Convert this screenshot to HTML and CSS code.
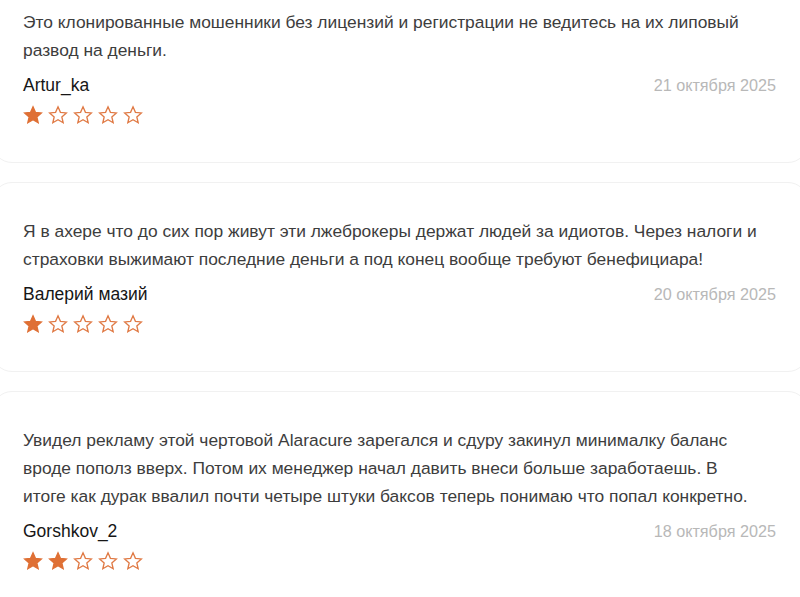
FILE: index.html
```html
<!DOCTYPE html>
<html lang="ru">
<head>
<meta charset="utf-8">
<link rel="stylesheet" href="styles.css">
</head>
<body>
<svg width="0" height="0" class="defs">
  <defs>
    <symbol id="star" viewBox="0 0 24 24">
      <path d="M12 2.2l2.9 6.6 7.1.7-5.4 4.8 1.6 7-6.2-3.7-6.2 3.7 1.6-7L2 9.5l7.1-.7z"/>
    </symbol>
  </defs>
</svg>
<main class="list">
  <article class="card first">
    <p class="text">Это клонированные мошенники без лицензий и регистрации не ведитесь на их липовый развод на деньги.</p>
    <div class="meta"><span class="name">Artur_ka</span><span class="date">21 октября 2025</span></div>
    <div class="stars">
      <svg class="star full"><use href="#star"/></svg>
      <svg class="star"><use href="#star"/></svg>
      <svg class="star"><use href="#star"/></svg>
      <svg class="star"><use href="#star"/></svg>
      <svg class="star"><use href="#star"/></svg>
    </div>
  </article>
  <article class="card">
    <p class="text">Я в ахере что до сих пор живут эти лжеброкеры держат людей за идиотов. Через налоги и страховки выжимают последние деньги а под конец вообще требуют бенефициара!</p>
    <div class="meta"><span class="name">Валерий мазий</span><span class="date">20 октября 2025</span></div>
    <div class="stars">
      <svg class="star full"><use href="#star"/></svg>
      <svg class="star"><use href="#star"/></svg>
      <svg class="star"><use href="#star"/></svg>
      <svg class="star"><use href="#star"/></svg>
      <svg class="star"><use href="#star"/></svg>
    </div>
  </article>
  <article class="card">
    <p class="text">Увидел рекламу этой чертовой Alaracure зарегался и сдуру закинул минималку баланс вроде пополз вверх. Потом их менеджер начал давить внеси больше заработаешь. В итоге как дурак ввалил почти четыре штуки баксов теперь понимаю что попал конкретно.</p>
    <div class="meta"><span class="name">Gorshkov_2</span><span class="date">18 октября 2025</span></div>
    <div class="stars">
      <svg class="star full"><use href="#star"/></svg>
      <svg class="star full"><use href="#star"/></svg>
      <svg class="star"><use href="#star"/></svg>
      <svg class="star"><use href="#star"/></svg>
      <svg class="star"><use href="#star"/></svg>
    </div>
  </article>
</main>
</body>
</html>
```

FILE: styles.css
```css
html, body {
  margin: 0;
  padding: 0;
  background: #ffffff;
  overflow: hidden;
}
body {
  font-family: "Liberation Sans", Arial, sans-serif;
  color: #3a3a3a;
}
.defs {
  position: absolute;
  width: 0;
  height: 0;
}
.list {
  display: flex;
  flex-direction: column;
  gap: 19px;
  margin: -27px -8px 0;
}
.card {
  border: 1px solid #f1f1f1;
  border-radius: 20px;
  padding: 34px 30px 36px 30px;
  background: #ffffff;
}
.text {
  margin: 0 19px 0 0;
  font-size: 17.4px;
  line-height: 28px;
  color: #3d3d3d;
}
.meta {
  display: flex;
  justify-content: space-between;
  align-items: center;
  margin-top: 10px;
  height: 22px;
}
.name {
  font-size: 17.5px;
  color: #161616;
}
.date {
  font-size: 16.2px;
  color: #b8b8b8;
  margin-right: 1px;
}
.stars {
  display: flex;
  gap: 5px;
  margin-top: 8px;
  height: 22px;
  align-items: center;
}
.star {
  width: 20px;
  height: 20px;
  fill: #ffffff;
  stroke: #e07a45;
  stroke-width: 1.6;
  stroke-linejoin: miter;
}
.star.full {
  fill: #df7035;
  stroke: #df7035;
}
```
